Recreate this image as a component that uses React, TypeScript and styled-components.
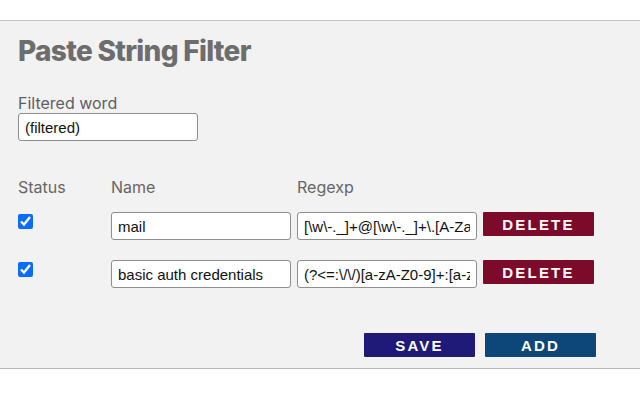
import React, { useState } from "react";
import styled, { createGlobalStyle } from "styled-components";

const GlobalStyle = createGlobalStyle`
  html, body {
    margin: 0;
    padding: 0;
    background: #ffffff;
  }
  body {
    font-family: Inter, "Liberation Sans", sans-serif;
  }
`;

type Rule = {
  id: number;
  enabled: boolean;
  name: string;
  regexp: string;
};

const initialRules: Rule[] = [
  { id: 1, enabled: true, name: "mail", regexp: "[\\w\\-._]+@[\\w\\-._]+\\.[A-Za-z]+" },
  {
    id: 2,
    enabled: true,
    name: "basic auth credentials",
    regexp: "(?<=:\\/\\/)[a-zA-Z0-9]+:[a-zA-Z0-9]+(?=@)",
  },
];

const App = () => {
  const [filtered, setFiltered] = useState("(filtered)");
  const [rules, setRules] = useState<Rule[]>(initialRules);

  const updateRule = (id: number, patch: Partial<Rule>) => {
    setRules(rules.map((r) => (r.id === id ? { ...r, ...patch } : r)));
  };

  const addRule = () => {
    setRules([...rules, { id: Date.now(), enabled: true, name: "", regexp: "" }]);
  };

  return (
    <>
      <GlobalStyle />
      <Panel>
        <Title>Paste String Filter</Title>
        <FieldLabel>Filtered word</FieldLabel>
        <TextInput value={filtered} onChange={(e) => setFiltered(e.target.value)} />

        <RuleGrid>
          <HeadCell>Status</HeadCell>
          <HeadCell>Name</HeadCell>
          <HeadCell>Regexp</HeadCell>
          <span />
          {rules.map((rule) => (
            <React.Fragment key={rule.id}>
              <CheckCell>
                <Check
                  type="checkbox"
                  checked={rule.enabled}
                  onChange={(e) => updateRule(rule.id, { enabled: e.target.checked })}
                />
              </CheckCell>
              <TextInput
                value={rule.name}
                onChange={(e) => updateRule(rule.id, { name: e.target.value })}
              />
              <TextInput
                value={rule.regexp}
                onChange={(e) => updateRule(rule.id, { regexp: e.target.value })}
              />
              <ActionButton
                tone="#7c0a2b"
                onClick={() => setRules(rules.filter((r) => r.id !== rule.id))}
              >
                DELETE
              </ActionButton>
            </React.Fragment>
          ))}
        </RuleGrid>

        <Footer>
          <ActionButton tone="#1f1a77">SAVE</ActionButton>
          <ActionButton tone="#0d477a" onClick={addRule}>
            ADD
          </ActionButton>
        </Footer>
      </Panel>
    </>
  );
};

export default App;

const Panel = styled.div`
  margin-top: 20px;
  height: 334px;
  padding: 13px 18px 0 18px;
  background: #f2f2f2;
  border-top: 1px solid #c6c6c6;
  border-bottom: 1px solid #b8b8b8;
  display: flex;
  flex-direction: column;
  align-items: flex-start;
`;

const Title = styled.h1`
  margin: 0;
  font-family: Inter, "Liberation Sans", sans-serif;
  font-size: 28px;
  font-weight: 800;
  letter-spacing: -0.7px;
  color: #6d6d6d;
`;

const FieldLabel = styled.label`
  margin-top: 25px;
  font-size: 16px;
  color: #5f5f5f;
`;

const TextInput = styled.input`
  box-sizing: border-box;
  width: 180px;
  height: 28px;
  margin: 0;
  padding: 0 6px;
  background: #ffffff;
  border: 1px solid #8e8e8e;
  border-radius: 3px;
  font-family: "Liberation Sans", Arial, sans-serif;
  font-size: 15px;
  color: #111111;
  outline: none;
`;

const RuleGrid = styled.div`
  margin-top: 36px;
  display: grid;
  grid-template-columns: 87px 180px 180px 111px;
  column-gap: 6px;
  row-gap: 20px;
  align-items: start;
`;

const HeadCell = styled.div`
  font-size: 16px;
  color: #666666;
  margin-bottom: -5px;
`;

const CheckCell = styled.div`
  padding-top: 1px;
`;

const Check = styled.input`
  width: 15px;
  height: 15px;
  margin: 0;
  accent-color: #0a6cfa;
`;

const ActionButton = styled.button<{ tone: string }>`
  box-sizing: border-box;
  width: 111px;
  height: 24px;
  padding: 0;
  border: none;
  border-radius: 1px;
  background: ${({ tone }) => tone};
  color: #ffffff;
  font-family: "Liberation Sans", Arial, sans-serif;
  font-size: 15px;
  font-weight: 700;
  letter-spacing: 2.2px;
  cursor: pointer;
`;

const Footer = styled.div`
  margin-top: auto;
  margin-bottom: 11px;
  align-self: stretch;
  display: flex;
  justify-content: flex-end;
  gap: 10px;
  padding-right: 26px;
`;
